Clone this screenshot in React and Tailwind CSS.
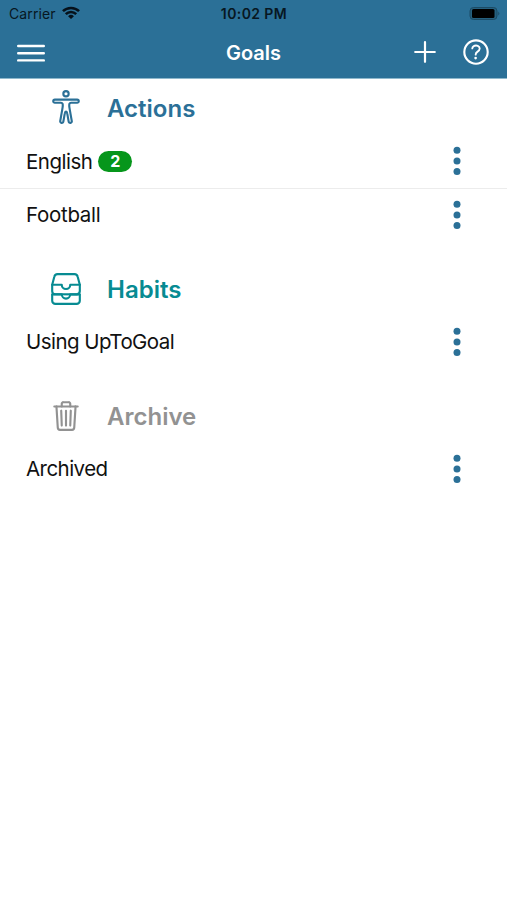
import { IoBodyOutline, IoFileTrayStackedOutline, IoTrashOutline, IoHelpCircleOutline } from "react-icons/io5";

function Dots() {
  return (
    <svg className="h-[30px] w-[10px] shrink-0" viewBox="0 0 10 30" fill="#2b7097">
      <circle cx="5" cy="4.2" r="3.5" />
      <circle cx="5" cy="15" r="3.5" />
      <circle cx="5" cy="25.6" r="3.5" />
    </svg>
  );
}

function Row({ label, badge, divided, track, className = "h-[53px]" }) {
  return (
    <li
      className={
        "flex items-center justify-between pl-[26px] pr-[45px] text-[20.5px] text-[#111] " +
        (divided ? "h-[55px] border-b border-[#ececec]" : className)
      }
    >
      <span className="flex items-center gap-[6px] whitespace-nowrap">
        <span className={"pt-[2px] " + track}>{label}</span>
        {badge && (
          <span className="flex h-[21px] w-[34px] items-center justify-center rounded-full bg-[#06961b] text-[16px] font-bold text-white">
            {badge}
          </span>
        )}
      </span>
      <Dots />
    </li>
  );
}

function Section({ icon: Icon, iconClass = "", title, color, className, children }) {
  return (
    <section className={className}>
      <h2 className={"flex h-[53px] items-center pl-[49px] text-[24px] font-semibold " + color}>
        <Icon className={"mr-[24px] size-[34px] " + iconClass} />
        <span className="pt-[2px]">{title}</span>
      </h2>
      <ul>{children}</ul>
    </section>
  );
}

export default function App() {
  return (
    <div className="h-[900px] w-[507px] overflow-hidden bg-white font-['Inter','Liberation_Sans',sans-serif]">
      <header className="h-[79px] border-b border-[#8fb8cc] bg-[#2b7097]">
        <div className="grid h-[27px] grid-cols-3 items-center pl-[9px] pr-[7px] text-[14px] text-[#071722]">
          <div className="flex items-center gap-[6px]">
            <span className="tracking-[0.1px]">Carrier</span>
            <svg className="mb-px h-[14px] w-[18px]" viewBox="0 0 19 14" fill="none" stroke="#06111a" strokeWidth="2.7">
              <path d="M1 5.1a12.2 12.2 0 0 1 17 0" />
              <path d="M4 8.2a7.8 7.8 0 0 1 11 0" />
              <path d="M9.5 13.3 6.4 10.3a4.4 4.4 0 0 1 6.2 0Z" fill="#06111a" stroke="none" />
            </svg>
          </div>
          <div className="pr-px text-center text-[14px] font-semibold tracking-[0.4px]">10:02 PM</div>
          <svg className="h-[14px] w-[31px] justify-self-end" viewBox="0 0 31 14">
            <rect x="1" y="0.5" width="27" height="12" rx="3.5" fill="#25607f" stroke="#1c4b65" />
            <rect x="3" y="2" width="22.5" height="9" rx="1.5" fill="#000" />
            <path d="M29.3 4.5a2.5 2.5 0 0 1 0 4Z" fill="#1c4b65" />
          </svg>
        </div>
        <div className="grid h-[51px] grid-cols-3 items-center pl-[17px] pr-[14px]">
          <svg className="h-[20px] w-[28px]" viewBox="0 0 28 20" stroke="#fff" strokeWidth="2.4" strokeLinecap="round">
            <path d="M1.2 3H26.8M1.2 10.2H26.8M1.2 17.4H26.8" />
          </svg>
          <h1 className="pr-[3px] text-center text-[20px] font-semibold text-white">Goals</h1>
          <div className="flex items-center justify-end gap-[23px] pb-px text-white">
            <svg className="size-[22px]" viewBox="0 0 22 22" stroke="#fff" strokeWidth="2.2" strokeLinecap="round">
              <path d="M11 1.2V20.8M1.2 11H20.8" />
            </svg>
            <IoHelpCircleOutline className="size-[34px]" />
          </div>
        </div>
      </header>
      <main>
        <Section icon={IoBodyOutline} iconClass="mb-[2px]" title="Actions" color="text-[#2b7097]" className="mt-[2px]">
          <Row label="English" badge="2" track="tracking-[-0.5px]" divided />
          <Row label="Football" track="tracking-[-0.3px]" className="h-[53px] pb-[2px]" />
        </Section>
        <Section icon={IoFileTrayStackedOutline} title="Habits" color="text-[#078b92]" className="mt-[20px]">
          <Row label="Using UpToGoal" track="tracking-[-0.55px]" />
        </Section>
        <Section icon={IoTrashOutline} title="Archive" color="text-[#929292]" className="mt-[21px]">
          <Row label="Archived" track="tracking-[-0.55px]" />
        </Section>
      </main>
    </div>
  );
}
